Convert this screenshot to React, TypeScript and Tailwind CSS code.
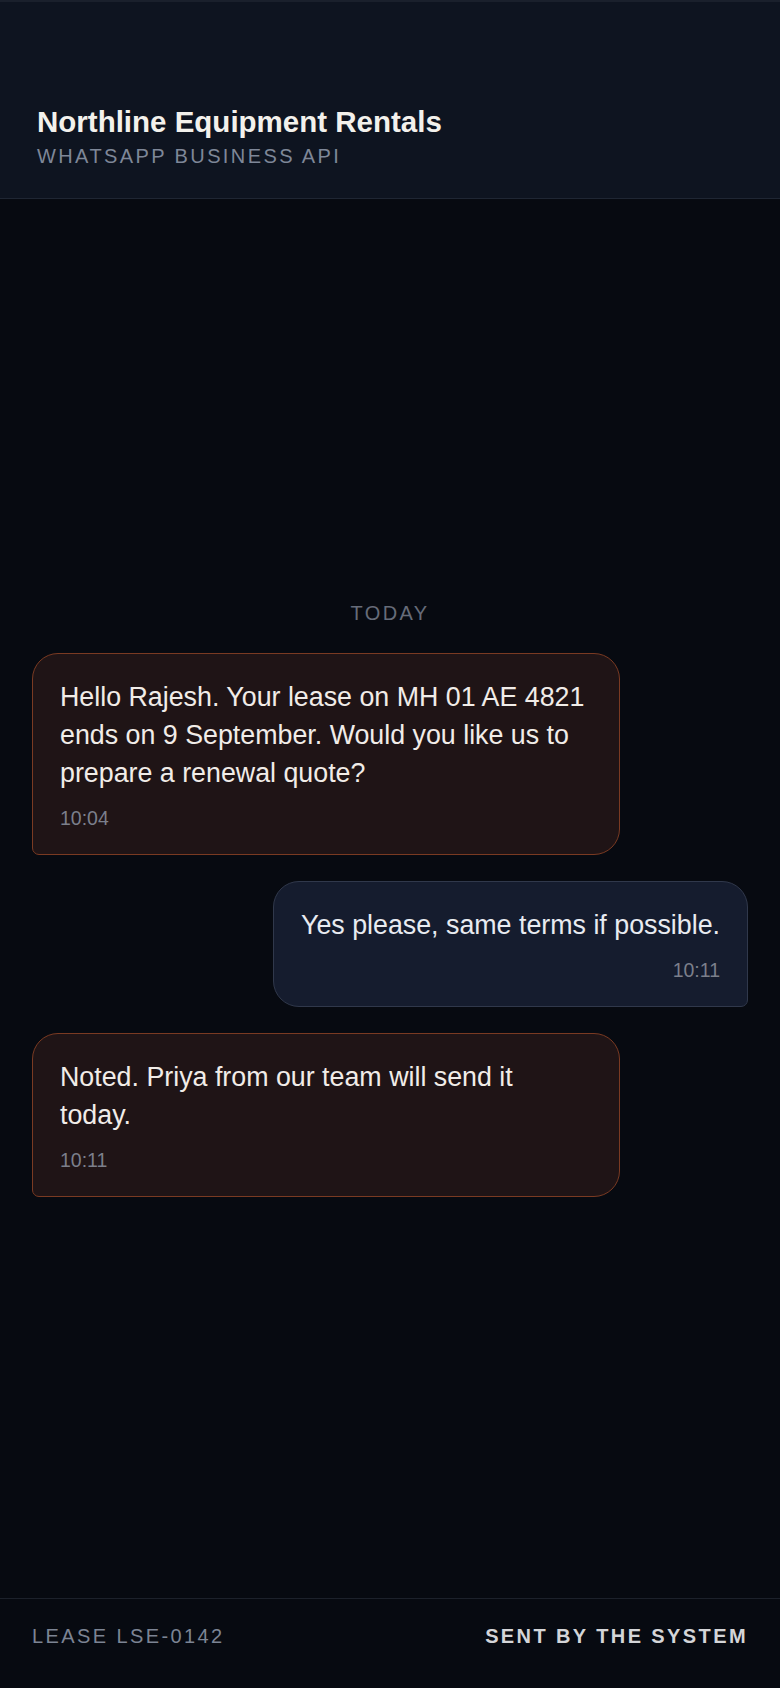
const messages = [
  {
    id: 1,
    from: 'agent',
    text: 'Hello Rajesh. Your lease on MH 01 AE 4821 ends on 9 September. Would you like us to prepare a renewal quote?',
    time: '10:04',
  },
  { id: 2, from: 'customer', text: 'Yes please, same terms if possible.', time: '10:11' },
  { id: 3, from: 'agent', text: 'Noted. Priya from our team will send it today.', time: '10:11' },
];

function Bubble({ from, text, time }: { from: string; text: string; time: string }) {
  const agent = from === 'agent';
  return (
    <div
      className={`flex flex-col border ${
        agent
          ? 'self-start w-[588px] pl-[27px] pr-[28px] rounded-[26px] rounded-bl-[7px] bg-[#1f1416] border-[#7a3a22] text-[#f1ece8]'
          : 'self-end max-w-[588px] px-[27px] rounded-[26px] rounded-br-[7px] bg-[#151c2e] border-[#30384b] text-[#e8ebf1]'
      } pt-[24px] pb-[24px]`}
    >
      <p className="text-[26.8px] leading-[38px]">{text}</p>
      <span
        className={`mt-[14px] text-[19.5px] leading-[24px] text-[#7b7f8b] ${agent ? 'self-start' : 'self-end'}`}
      >
        {time}
      </span>
    </div>
  );
}

export default function App() {
  return (
    <div className="h-[1688px] w-full flex flex-col bg-[#070a11] font-['Liberation_Sans',Arial,sans-serif]">
      {/* Header */}
      <header className="h-[199px] shrink-0 flex flex-col justify-end px-[37px] pb-[29px] bg-[#0e1420] border-t-2 border-t-[#1a202c] border-b border-b-[#1f2633]">
        <h1 className="text-[29.5px] leading-[34px] font-bold text-[#f3f1ec]">Northline Equipment Rentals</h1>
        <p className="mt-[4px] text-[20px] leading-[26px] tracking-[0.12em] text-[#7e8798]">WHATSAPP BUSINESS API</p>
      </header>

      {/* Conversation */}
      <main className="flex-1 flex flex-col justify-center px-[32px]">
        <div className="text-center text-[20px] leading-[26px] tracking-[0.12em] text-[#666c79] mb-[27px]">TODAY</div>
        <div className="flex flex-col gap-[26px]">
          {messages.map((m) => (
            <Bubble key={m.id} from={m.from} text={m.text} time={m.time} />
          ))}
        </div>
      </main>

      {/* Footer */}
      <footer className="h-[90px] shrink-0 flex items-start justify-between px-[32px] pt-[24px] border-t border-[#1c212b]">
        <span className="text-[20px] leading-[26px] tracking-[0.12em] text-[#7c8494]">LEASE LSE-0142</span>
        <span className="text-[20px] leading-[26px] tracking-[0.12em] font-bold text-[#d4d5d8]">SENT BY THE SYSTEM</span>
      </footer>
    </div>
  );
}
